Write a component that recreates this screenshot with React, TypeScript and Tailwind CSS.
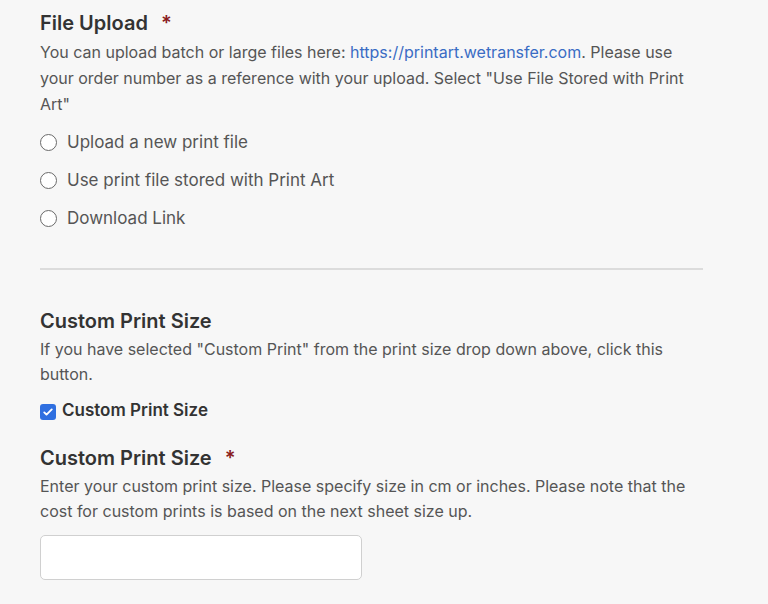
export default function App() {
  return (
    <div className="min-h-[604px] bg-[#f7f7f7] text-[#444] font-['Inter','Liberation_Sans',sans-serif]">
      <div className="w-[663px] ml-10 pt-[10px]">
        {/* File upload */}
        <h2 className="text-[20px] font-semibold text-[#333] leading-[26px]">
          File Upload <span className="ml-2 text-[#8a1c1c]">*</span>
        </h2>
        <p className="mt-[3px] text-[16px] leading-[26px] text-[#555]">
          You can upload batch or large files here:{" "}
          <a className="text-[#3a6cc4]">https://printart.wetransfer.com</a>. Please use your order
          number as a reference with your upload. Select "Use File Stored with Print Art"
        </p>
        <div className="mt-[13px] flex flex-col gap-[13px]">
          {["Upload a new print file", "Use print file stored with Print Art", "Download Link"].map((l) => (
            <label key={l} className="flex items-center gap-[10px] text-[17px] leading-[25px] text-[#555]">
              <span className="w-[17px] h-[17px] rounded-full border border-[#6a6a6a] bg-white" />
              {l}
            </label>
          ))}
        </div>

        <hr className="mt-[37px] border-t-2 border-[#dcdcdc]" />

        {/* Custom print size */}
        <h2 className="mt-[38px] text-[20px] font-semibold text-[#333] leading-[26px]">Custom Print Size</h2>
        <p className="mt-[3px] text-[16px] leading-[25px] text-[#555]">
          If you have selected "Custom Print" from the print size drop down above, click this button.
        </p>
        <label className="mt-[12px] flex items-center gap-[6px] text-[17px] font-semibold text-[#333] leading-[22px]">
          <span className="w-[16px] h-[16px] mt-[4px] rounded-[3px] bg-[#2f6fe0] flex items-center justify-center">
            <svg viewBox="0 0 16 16" className="w-[12px] h-[12px]" fill="none" stroke="white" strokeWidth="2.5" strokeLinecap="round" strokeLinejoin="round">
              <path d="M3 8.5l3 3 7-7" />
            </svg>
          </span>
          Custom Print Size
        </label>

        <h2 className="mt-[24px] text-[20px] font-semibold text-[#333] leading-[26px]">
          Custom Print Size <span className="ml-2 text-[#8a1c1c]">*</span>
        </h2>
        <p className="mt-[3px] text-[16px] leading-[25px] text-[#555]">
          Enter your custom print size. Please specify size in cm or inches. Please note that the cost for
          custom prints is based on the next sheet size up.
        </p>
        <input className="mt-[11px] block w-[322px] h-[45px] rounded-[5px] border border-[#d0d0d0] bg-white" />
      </div>
    </div>
  );
}
